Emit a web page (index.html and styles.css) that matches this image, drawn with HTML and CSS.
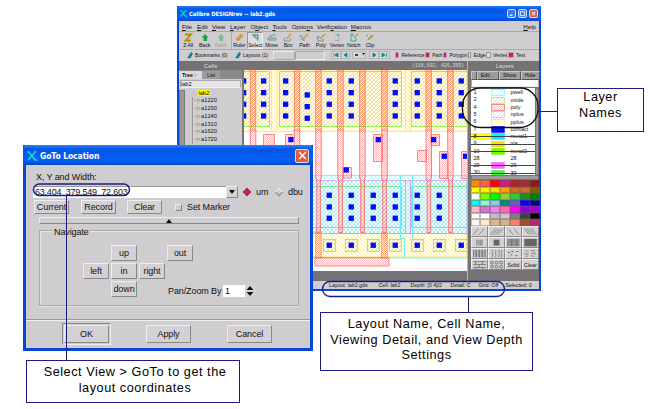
FILE: index.html
```html
<!DOCTYPE html>
<html lang="en">
<head>
<meta charset="utf-8">
<title>Calibre DESIGNrev - GoTo Location</title>
<link rel="stylesheet" href="styles.css">
</head>
<body>
<section class="window main-window">
  <header class="titlebar">
    <svg class="logo" viewBox="0 0 10 10"><path d="M0 1h2l6 8h2M9 0L1 9" stroke="#19dfd3" stroke-width="1.5" fill="none"/></svg>
    <span class="title">Calibre DESIGNrev -- lab2.gds</span>
    <span class="wbtn"><svg viewBox="0 0 8 8"><path d="M2 6h3" stroke="#fff" stroke-width="1.4"/></svg></span>
    <span class="wbtn"><svg viewBox="0 0 8 8"><path d="M1.5 2h5v4.500h-5z" stroke="#fff" fill="none"/></svg></span>
    <span class="wbtn close"><svg viewBox="0 0 8 8"><path d="M2 2l4 4M6 2L2 6" stroke="#fff" stroke-width="1.2"/></svg></span>
  </header>
  <nav class="menu">
    <span class="w15"><u>F</u>ile</span><span class="w15"><u>E</u>dit</span><span class="w18"><u>V</u>iew</span><span class="w20"><u>L</u>ayer</span><span class="w22">O<u>b</u>ject</span><span class="w19"><u>T</u>ools</span><span class="w25">Optio<u>n</u>s</span><span class="w34">Verifi<u>c</u>ation</span><span><u>M</u>acros</span><span class="help"><u>H</u>elp</span>
  </nav>
  <div class="toolbar">
    <div class="tool"><svg viewBox="0 0 10 9"><path d="M2 1.500h6L2.500 7.500H8" stroke="#b88b00" stroke-width="1.800" fill="none"/></svg><span>Z All</span></div>
    <div class="tool"><svg viewBox="0 0 10 9"><path d="M1.500 4.500L5 1l3.500 3.500H7V8H3.500V4.500z" fill="#15a044"/></svg><span>Back</span></div>
    <div class="tool faded"><svg viewBox="0 0 10 9"><path d="M1.500 4.500L5 1l3.500 3.500H7V8H3.500V4.500z" fill="#7dbb98"/></svg><span>Forth</span></div>
    <div class="tool ruler"><svg viewBox="0 0 10 9"><path d="M2 6L7 1l2 2-5 5z" fill="#e0a52b" stroke="#9a7420" stroke-width=".5"/></svg><span>Ruler</span></div>
    <div class="tool pressed"><svg viewBox="0 0 10 9"><path d="M2 2h6v6M3 2l4 4" stroke="#4a9a9a" stroke-width="1.500" fill="none"/></svg><span>Select</span></div>
    <div class="tool"><svg viewBox="0 0 10 9"><path d="M1 7h8V5H1zM2 3h3M5 2h4" stroke="#6b9797" fill="#b4cccc"/></svg><span>Move</span></div>
    <div class="tool"><svg viewBox="0 0 10 9"><path d="M1 5v3h6V5" stroke="#5da3a3" fill="none"/><path d="M3 6l5-5" stroke="#c9a13c" stroke-width="1.600"/></svg><span>Box</span></div>
    <div class="tool"><svg viewBox="0 0 10 9"><path d="M0 3h3v4h3" stroke="#4ba0a0" fill="none"/><path d="M4 6l5-5" stroke="#c9a13c" stroke-width="1.600"/></svg><span>Path</span></div>
    <div class="tool"><svg viewBox="0 0 10 9"><path d="M1 4h3M1 4l1 4h5V6" stroke="#4ba0a0" fill="none"/><path d="M4 6l5-5" stroke="#c9a13c" stroke-width="1.600"/></svg><span>Poly</span></div>
    <div class="tool"><svg viewBox="0 0 10 9"><path d="M3 1.500h4v6H3" stroke="#8eb0b5" fill="none"/><path d="M6 1v2" stroke="#4a9a9a"/></svg><span>Vertex</span></div>
    <div class="tool"><svg viewBox="0 0 10 9"><path d="M2 1v7h5V5M2 1h2v3" stroke="#4ba0a0" fill="#b4dcdc"/><path d="M5 5l4-4" stroke="#c9a13c" stroke-width="1.600"/></svg><span>Notch</span></div>
    <div class="tool"><svg viewBox="0 0 10 9"><path d="M1 3l2-1M3 7l1-2" stroke="#4ba0a0"/><path d="M4 6l4-4" stroke="#b79b42" stroke-width="1.800"/></svg><span>Clip</span></div>
  </div>
  <div class="options">
    <svg class="mark" viewBox="0 0 7 8"><path d="M1 7L5 1l1 1-3 5" stroke="#147f8e" stroke-width="1.600" fill="none"/></svg><span class="bm">Bookmarks (0)</span>
    <svg class="mark" viewBox="0 0 7 8"><path d="M1 7L5 1l1 1-3 5" stroke="#147f8e" stroke-width="1.600" fill="none"/></svg><span class="lay">Layouts (1)</span>
    <i class="combo c1"></i><i class="combo c2"></i>
    <svg class="nav" viewBox="0 0 60 8"><g fill="#d6d4d6" stroke="#a5a3a5" stroke-width=".6"><path d="M.5.500h9v7h-9zM10.500.500h8v7h-8zM21.500.500h13v7h-13zM38.500.500h9v7h-9zM48.500.500h10v7h-10z"/></g><path d="M3 2v4M7 2v4L4 4zM16 2v4l-3-2zM42 2v4l3-2zM51 2v4l3-2zM55.500 2v4" fill="#008c86" stroke="#008c86" stroke-width=".8"/><path d="M24 4h3" stroke="#444" stroke-width="2"/><path d="M31 2h3l-1.500 2z" fill="#111"/></svg>
    <span class="chk on w30">Reference</span><span class="chk on w18">Path</span><span class="chk on w25">Polygon</span><span class="chk w18">Edge</span><span class="chk w22">Vertex</span><span class="chk on">Text</span>
  </div>
  <div class="work">
    <aside class="cells">
      <div class="head">Cells</div>
      <div class="tabs"><span class="tab active">Tree <small>▽</small></span><span class="tab">List</span></div>
      <div class="field">lab2</div>
      <div class="tree"><i class="track"></i><ul id="tree"></ul></div>
    </aside>
    <main class="view">
      <div class="head coords">(116,602, 426,359)</div>
      <svg id="layout" class="layout" viewBox="0 0 223 201">
        <defs>
          <pattern id="oxide" width="4" height="4" patternUnits="userSpaceOnUse"><path d="M-1 1L1-1M0 4L4 0M3 5L5 3" stroke="#8cf962" stroke-width=".7"/></pattern>
          <pattern id="pplus" width="4" height="4" patternUnits="userSpaceOnUse"><path d="M-1 3L1 5M0 0L4 4M3-1L5 1" stroke="#ffe480" stroke-width=".7"/></pattern>
          <pattern id="pwell" width="4" height="4" patternUnits="userSpaceOnUse"><path d="M-1 3L1 5M0 0L4 4M3-1L5 1" stroke="#8cf2fa" stroke-width=".7"/></pattern>
          <pattern id="nplus" width="4" height="4" patternUnits="userSpaceOnUse"><path d="M-1 1L1-1M0 4L4 0M3 5L5 3" stroke="#e9b4f2" stroke-width=".8"/></pattern>
          <pattern id="poly" width="2" height="2" patternUnits="userSpaceOnUse"><path d="M0 0h1v1H0zM1 1h1v1H1z" fill="#ff7777" opacity=".5"/></pattern>
          <pattern id="active" width="2" height="2" patternUnits="userSpaceOnUse"><path d="M0 0h1v1H0zM1 1h1v1H1z" fill="#f25328" opacity=".55"/></pattern>
        </defs>
        <rect width="223" height="201" fill="#fff"/>
        <path d="M0 0h223v61.500H0z" fill="url(#pplus)" stroke="#ffe070" stroke-width=".8"/>
        <path d="M-2 1.500H25.500v55H-2zM35.500 1.500h122v55h-122zM167.500 1.500H225v55h-57.500z" fill="url(#oxide)" stroke="#75f347" stroke-width=".8"/>
        <path d="M27.500 0v61M33 0v61M161.500 0v61M166 0v61" stroke="#ffdc55" fill="none" stroke-width=".7"/>
        <path d="M0 105.500h223v58H0z" fill="url(#pwell)" stroke="#7cf3fa"/>
        <path d="M0 110.500h223v53H0z" fill="url(#nplus)" stroke="#dfa2ec" stroke-width=".8"/>
        <path d="M0 163.500h223v23.500H0z" fill="url(#pplus)" stroke="#ffe070"/>
        <path d="M0 163.500h223" stroke="#ffa052"/><path d="M0 188h223" stroke="#67f4f4"/>
        <path d="M60 116.500h97.500v41H60M223 116.500h-55.500v41H223" fill="none" stroke="#78ed8a"/>
        <path d="M156.500 105v63.500h4V188M168.500 105v63" stroke="#6ff0f6" fill="none"/>
        <path d="M161.500 110v53M166.500 110v53" stroke="#df9ced"/>
        <g id="strips"></g>
        <path d="M19.500 110V64.500h11V110M49.500 64.500h-8V110M129.500 64.500h9v27h-9zM187 64.500h8.500v11H187zM173.500 80.500h9v11h-9zM195.500 81.500h8.500v27h-8.500zM217.500 81.500h8v27h-8zM99 97.500h8.500v10.500H99zM71 187.500h74v8.500H71z" fill="url(#poly)" stroke="#fb6c70" stroke-width=".8"/>
        <g id="contacts" fill="#0010f5"></g>
      </svg>
    </main>
    <aside class="layers">
      <div class="head">Layers</div>
      <div class="buttons"><i></i><span>Edit...</span><span>Show</span><span>Hide</span></div>
      <div class="field"></div>
      <div class="list"><div id="layers"></div><i class="thumb"></i></div>
      <div class="hscroll"></div>
      <div id="palette" class="palette"></div>
      <div class="patterns">
        <svg viewBox="0 0 17 11"><path d="M1 9l6-7M8 9l6-7" stroke="#555" stroke-width=".7"/></svg>
        <svg viewBox="0 0 17 11"><path d="M1 9l6-7M4 9l6-7M7 9l6-7M10 9l6-7" stroke="#555" stroke-width=".7"/></svg>
        <svg viewBox="0 0 17 11"><path d="M2 2l6 7M9 2l6 7" stroke="#555" stroke-width=".7"/></svg>
        <svg viewBox="0 0 17 11"><path d="M1 2l6 7M4 2l6 7M7 2l6 7M10 2l6 7" stroke="#555" stroke-width=".7"/></svg>
        <svg viewBox="0 0 17 11"><path d="M4.500 5.500h8" stroke="#888" stroke-width="7" stroke-dasharray="1 .5"/></svg>
        <svg viewBox="0 0 17 11"><path d="M5 2h7v7H5z" fill="#666"/></svg>
        <svg viewBox="0 0 17 11"><path d="M1 5.500h15" stroke="#666" stroke-width="9" stroke-dasharray="1 .5"/></svg>
        <svg viewBox="0 0 17 11"><path d="M1 1h15v9H1z" fill="#666"/></svg>
        <svg viewBox="0 0 17 11"><path d="M1 5.500h15" stroke="#555" stroke-width="9" stroke-dasharray=".8 1"/></svg>
        <svg viewBox="0 0 17 11"><path d="M3 1l1 2-1 2 1 2-1 3M7 1l1 2-1 2 1 2-1 3M11 1l1 2-1 2 1 2-1 3M14 1l1 2-1 2 1 2-1 3" stroke="#666" stroke-width=".8" fill="none"/></svg>
        <svg viewBox="0 0 17 11"><path d="M2 4h2M6 3h2M5 7h2M12 3h2M11 8h2" stroke="#444"/></svg>
        <svg viewBox="0 0 17 11"><path d="M2 3l2-1 2 1M9 2h3l2 1M1 6h3l2-1M9 6l2-1 4 1M3 9l3-1M9 8l4 1" stroke="#666" stroke-width=".8" fill="none"/></svg>
        <svg viewBox="0 0 17 11"><path d="M1 2h15M1 5.500h15M1 9h15M4 2v3.500M12 2v3.500M8 5.500V9M4 9v2M12 9v2" stroke="#555" stroke-width=".8"/></svg>
        <svg viewBox="0 0 17 11"><g fill="none" stroke="#555" stroke-width=".8"><circle cx="3" cy="3" r="1.700"/><circle cx="8.500" cy="3" r="1.700"/><circle cx="14" cy="3" r="1.700"/><circle cx="3" cy="8" r="1.700"/><circle cx="8.500" cy="8" r="1.700"/><circle cx="14" cy="8" r="1.700"/></g></svg>
        <span>Solid</span><span>Clear</span>
      </div>
    </aside>
  </div>
  <footer class="status"><span class="s1">Layout: lab2.gds</span><span class="s2">Cell: lab2</span><span class="s3">Depth: [0 4]/2</span><span class="s4">Detail: C</span><span class="s5">Grid: Off</span><span>Selected: 0</span></footer>
</section>

<section class="window dialog">
  <header class="titlebar">
    <svg class="logo" viewBox="0 0 10 10"><path d="M0 1h2l6 8h2M9 0L1 9" stroke="#19dfd3" stroke-width="1.500" fill="none"/></svg>
    <span class="title">GoTo Location</span>
    <span class="wbtn close"><svg viewBox="0 0 8 8"><path d="M1.500 1.500l5 5M6.500 1.500l-5 5" stroke="#fff" stroke-width="1.100"/></svg></span>
  </header>
  <div class="form">
    <label class="caption">X, Y and Width:</label>
    <div class="row coords-row"><div class="entry">63.404&nbsp; 379.549&nbsp; 72.603</div><span class="drop"></span><i class="radio on"></i><span class="um">um</span><i class="radio"></i><span>dbu</span></div>
    <div class="row action-row"><button class="b-current">Current</button><button class="b-record">Record</button><button class="b-clear">Clear</button><i class="box"></i><span>Set Marker</span></div>
    <div class="collapse"><i></i></div>
    <div class="navigate">
      <span class="legend">Navigate</span>
      <div class="pad"><button class="up">up</button><button class="out">out</button><button class="left">left</button><button class="in">in</button><button class="right">right</button><button class="down">down</button></div>
      <div class="zoom"><span>Pan/Zoom By</span><span class="num">1</span><svg viewBox="0 0 10 12"><path d="M0 0h10v12H0z" fill="#d4d2d4"/><path d="M1.500 5L5 1l3.500 4zM1.500 7L5 11l3.500-4z" fill="#111"/></svg></div>
    </div>
    <div class="footer"><span class="default"><button>OK</button></span><button>Apply</button><button>Cancel</button></div>
  </div>
</section>

<div class="callout goto-note">Select View &gt; GoTo to get the<br>layout coordinates</div>
<div class="callout status-note">Layout Name, Cell Name,<br>Viewing Detail, and View Depth<br>Settings</div>
<div class="callout layer-note">Layer<br>Names</div>
<svg class="leaders" viewBox="0 0 650 409" fill="none" stroke="#1b1b83">
  <rect x="33.500" y="184" width="96" height="11.500" rx="5.700" stroke-width="1.500"/>
  <path d="M66.500 195v165M468.500 297v15M538 111.500h20"/>
  <rect x="322.500" y="281.500" width="182" height="15" rx="7.500" stroke-width="1.300"/>
  <rect x="462.500" y="88" width="75.500" height="39.500" rx="18" stroke="#111" stroke-width="1.300"/>
</svg>
<script src="script.js"></script>
</body>
</html>
```
FILE: styles.css
```css
* { box-sizing: border-box; }
body { margin: 0; width: 650px; height: 409px; position: relative; overflow: hidden; background: #fff; font-family: "Liberation Sans", Arial, sans-serif; color: #111; }
span, label, button { white-space: nowrap; }
i { display: block; }
.window { position: absolute; display: flex; flex-direction: column; background: #cfcdcf; border: 2px solid #0647d6; border-top: 0; }
.main-window { left: 177px; top: 6px; width: 364px; height: 285px; font-size: 5.6px; }
.titlebar { display: flex; align-items: center; background: linear-gradient(#2a86f8, #0355e6 20%, #0361f8 75%, #0448c8); color: #fff; font-family: "DejaVu Sans", sans-serif; font-weight: bold; margin: 0 -2px; flex: none; }
.main-window .titlebar { height: 15px; padding: 0 3px; font-size: 6px; gap: 2px; border-radius: 2px 2px 0 0; }
.logo { width: 7px; height: 7px; }
.title { flex: 1; }
.main-window .title { font-family: "DejaVu Sans Condensed", "DejaVu Sans", sans-serif; font-size: 5.8px; letter-spacing: -.05px; }
.wbtn { display: grid; place-items: center; width: 9px; height: 9px; background: #3978ed; border: .7px solid #cfe0ff; border-radius: 2px; }
.wbtn svg { width: 7px; height: 7px; }
.close { background: #e65a35; }
.menu { display: flex; height: 11px; align-items: center; padding: 0 3px; font-size: 6.2px; border-bottom: 1px solid #aaa8aa; flex: none; }
.help { margin-left: auto; }
.w15 { width: 15px; } .w18 { width: 18px; } .w19 { width: 19.300px; } .w20 { width: 20.400px; } .w22 { width: 22px; } .w25 { width: 25px; } .w30 { width: 30px; } .w34 { width: 34px; }
.toolbar { display: flex; height: 17.500px; padding-left: 1px; border-bottom: 1px solid #aaa8aa; flex: none; }
.tool { width: 16.400px; display: flex; flex-direction: column; align-items: center; line-height: 6px; font-size: 5.300px; letter-spacing: -.1px; padding-top: 1px; }
.tool svg { width: 10px; height: 9px; }
.faded { color: #999; }
.ruler { margin-left: 1.500px; border-left: 1px solid #aaa; }
.pressed { background: #dedcde; border: 1px solid; border-color: #999 #eee #eee #999; padding-top: 0; }
.options { display: flex; align-items: center; height: 11px; padding-left: 8px; font-size: 5.200px; flex: none; }
.mark { width: 6px; height: 7px; margin-right: 2px; flex: none; }
.bm { width: 40px; font-size: 5px; } .lay { width: 29.500px; font-size: 5px; }
.combo { height: 9px; border: 1px solid; border-color: #eee #aaa #aaa #eee; flex: none; }
.c1 { width: 22px; } .c2 { width: 30px; border-color: #aaa #eee #eee #aaa; }
.nav { width: 60px; height: 8px; margin: 0 4px 0 6px; flex: none; }
.chk { display: flex; align-items: center; gap: 2.500px; font-size: 5px; flex: none; }
.chk::before { content: ""; width: 4px; height: 4px; background: #dddbdd; border: .5px solid #999; }
.chk.on::before { background: #b02a5d; border-color: #d693ad; }
.work { display: flex; height: 220px; background: #747274; flex: none; }
.head { height: 9.500px; background: #747274; color: #ddd; text-align: center; line-height: 10px; font-size: 6px; }
.cells { width: 65px; border-right: 2px solid #777577; background: #cfcdcf; }
.tabs { display: flex; height: 9px; background: #8b898b; align-items: end; }
.tab { height: 8px; width: 18px; padding-left: 5px; line-height: 8px; font-size: 5.300px; background: #9c9a9c; }
.tab.active { width: 23px; padding-left: 3px; background: #dedcde; font-weight: bold; }
.tab small { font-size: 4px; font-weight: normal; color: #777; }
.field { background: #fff; height: 7.500px; border: 1px solid #aaa; border-bottom-color: #eee; }
.cells .field { margin: 1px 1px 2px; line-height: 6px; background: #e5e3e5; }
.tree { display: flex; height: 60px; }
.track { width: 6px; background: #999799; border: 1px solid #777; }
.tree ul { margin: 0; padding: 0 0 0 7px; list-style: none; }
.tree li { height: 7.750px; line-height: 7.750px; padding-left: 1px; white-space: nowrap; border-left: 1px solid #999; font-size: 5.700px; }
.tree li::before { content: "-◇ "; color: #666; font-size: 5px; }
.tree li:first-child { border: 0; padding-left: 0; }
.tree li:first-child::before { content: "▢ "; color: #aaa; }
.tree mark { background: #ffff00; }
.view { width: 223px; }
.coords { text-align: right; padding-right: 3px; font-family: "Liberation Mono", monospace; font-size: 4.800px; }
.layout { display: block; width: 223px; height: 201px; }
.layers { width: 72px; padding-left: 2.500px; border-left: 1px solid #b7b5b7; background: #747274; }
.buttons { display: grid; grid-template-columns: 6px 22px 22px 19px; height: 9px; padding: 1px 0; font-size: 5.300px; }
.buttons > * { background: #a09ea0; border: .5px solid; border-color: #c6c6c6 #555 #555 #c6c6c6; text-align: center; line-height: 7px; }
.layers .field { height: 8px; }
.list { display: flex; height: 87px; background: #fff; overflow: hidden; margin-top: 1px; }
#layers { width: 64px; padding-top: 1.2px; }
.layer { display: grid; grid-template-columns: 20px 20px 24px; align-items: center; height: 7.300px; line-height: 7px; position: relative; font-size: 5.500px; }
.layer b { font-weight: normal; padding-left: 3px; height: 7.300px; }
.layer svg { width: 14px; height: 6.800px; }
.layer.off::after { content: ""; position: absolute; left: 0; right: 0; top: 3.300px; height: 1px; background: #444; }
.layer.current b { background: #ffff00; }
.thumb { width: 5px; background: #9c9a9c; border: 1px solid #777; }
.hscroll { height: 5px; background: #9c9a9c; border: 1px solid #777; }
.palette { display: grid; grid-template-columns: repeat(7, 9.9px); grid-auto-rows: 6.500px; height: 45.500px; }
.palette i { border: .4px solid rgba(90,90,90,.4); }
.patterns { display: grid; grid-template-columns: repeat(4, 1fr); grid-auto-rows: 11.200px; }
.patterns > * { width: 100%; height: 11.200px; background: #d3d1d3; border: .7px solid; border-color: #eee #888 #888 #eee; }
.patterns span { line-height: 10px; text-align: center; font-size: 5.300px; }
.status { display: flex; align-items: center; height: 9px; padding-left: 150px; font-size: 5.300px; letter-spacing: -.02px; flex: none; }
.s1 { width: 49.500px; } .s2 { width: 32px; } .s3 { width: 40px; } .s4 { width: 28px; } .s5 { width: 27px; }

.dialog { left: 23px; top: 145px; width: 290px; height: 206px; border-width: 0 3px 3px; font-size: 9px; }
.dialog .titlebar { height: 20px; padding: 1px 4px 0 4px; margin: 0 -3px; font-size: 8.500px; border-radius: 4px 4px 0 0; }
.dialog .logo { width: 10px; height: 10px; margin-right: 3px; }
.dialog .title { letter-spacing: -.08px; font-family: "DejaVu Sans Condensed", "DejaVu Sans", sans-serif; }
.dialog .wbtn { width: 14px; height: 14px; }
.dialog .wbtn svg { width: 11px; height: 11px; }
.form { display: flex; flex-direction: column; height: 183px; padding: 7px 0 0; letter-spacing: -.1px; }
.caption { margin-left: 10px; height: 13.500px; line-height: 11px; }
.row { display: flex; align-items: center; flex: none; }
.coords-row { height: 12px; padding-left: 7px; }
.entry { width: 193px; height: 12px; background: #fff; line-height: 11px; padding-left: 2px; border-top: 1px solid #999; letter-spacing: -.22px; }
.drop { width: 12px; height: 12px; background: #d4d2d4; border: 1px solid; border-color: #eee #888 #888 #eee; display: grid; place-items: center; }
.drop::before { content: ""; border: 3.500px solid transparent; border-top: 4px solid #111; border-bottom: 0; }
.radio { width: 6px; height: 6px; transform: rotate(45deg); border: 1px solid; border-color: #eee #888 #888 #eee; margin: 0 6px 0 6px; }
.radio.on { background: #b02a5d; border-color: #b02a5d; }
.um { width: 14px; }
button { font: inherit; letter-spacing: inherit; color: #111; padding: 0; background: #d3d1d3; border: 1px solid; border-color: #eee #888 #888 #eee; flex: none; }
.action-row { margin-top: 2.500px; padding-left: 8px; height: 14px; }
.action-row button { height: 14px; }
.b-current { width: 35px; } .b-record { width: 35px; margin-left: 12px; } .b-clear { width: 35px; margin-left: 11px; }
.box { width: 7px; height: 7px; margin: 0 5px 0 13px; border: 1px solid; border-color: #eee #888 #888 #eee; }
.collapse { height: 7px; margin: 3px 11px 0 13px; border: 1px solid; border-color: #eee #888 #888 #eee; flex: none; display: grid; place-items: center; }
.collapse i { border: 3px solid transparent; border-bottom: 4px solid #111; border-top: 0; }
.navigate { margin: 6px 11px 0 13px; height: 76px; border: 1px solid #aaa8aa; box-shadow: inset 1px 1px #e7e5e7, 0 1px #e7e5e7; flex: none; }
.legend { display: block; width: 37px; height: 10px; line-height: 10px; margin: -4px 0 0 12px; padding-left: 2px; background: #cfcdcf; }
.pad { display: grid; grid-template-columns: 26px 26px 26px 26px; grid-template-rows: 16px 16px 16px; column-gap: 2px; row-gap: 2px; margin: 8px 0 0 43px; grid-template-areas: ". up . out" "left in right ." ". down . ."; }
.up { grid-area: up; } .out { grid-area: out; } .left { grid-area: left; } .in { grid-area: in; } .right { grid-area: right; } .down { grid-area: down; }
.zoom { display: flex; align-items: center; margin: -12px 0 0 128px; height: 12px; }
.zoom > span:first-child { width: 55px; }
.num { width: 22px; height: 12px; line-height: 12px; background: #fff; padding-left: 2px; }
.zoom svg { width: 10px; height: 12px; }
.footer { display: flex; align-items: center; margin-top: 13px; height: 29px; padding-left: 36px; border-top: 1px solid #999; box-shadow: inset 0 1px #eee; flex: none; }
.footer button { width: 45px; height: 18px; }
.default { border: 1px solid; border-color: #888 #eee #eee #888; padding: 1px; margin-right: 35px; }
.footer > button + button { margin-left: 36px; }

.callout { position: absolute; background: #fff; border: 1px solid #1b1b83; color: #000; text-align: center; font-size: 12.700px; line-height: 15.500px; white-space: nowrap; letter-spacing: .53px; }
.goto-note { left: 26px; top: 360px; width: 214px; height: 43px; padding-top: 4px; padding-left: 4px; }
.status-note { left: 320px; top: 312px; width: 213px; height: 59px; padding-top: 4px; }
.layer-note { left: 557px; top: 88px; width: 87px; height: 44px; padding-top: 1px; }
.leaders { position: absolute; left: 0; top: 0; width: 650px; height: 409px; }
```
FILE: script.js
```js
const byId = id => document.getElementById(id);

byId('tree').innerHTML = ['lab2', 'a1220', 'a1230', 'a1240', 'a1310', 'a1620', 'a1720']
  .map((name, i) => i ? `<li>${name}</li>` : `<li><mark>${name}</mark></li>`).join('');

// number, name, fill, outline, state
const layers = [
  [1, 'pwell', 'url(#pwell)', '#63f4ff', ''], [2, 'oxide', 'url(#oxide)', '#71ff3c', ''],
  [4, 'poly', 'url(#poly)', '#ff5555', ''], [5, 'nplus', 'url(#nplus)', '#e79df2', ''],
  [6, 'pplus', 'url(#pplus)', '#ffdc55', ''], [7, 'contact', '#0010f5', '#0010f5', ''],
  [8, 'metal1', '#00f5ff', '#00f5ff', 'off current'], [9, 'via', '#ffdb00', '#ffdb00', 'off'],
  [10, 'metal2', '#80f500', '#80f500', 'off'], [28, '28', 'none', 'none', ''],
  [29, '29', '#f86af8', '#f86af8', 'off'], [30, '30', '#4af04a', '#4af04a', 'off']
];
byId('layers').innerHTML = layers.map(([n, name, fill, line, state]) =>
  `<div class="layer ${state}"><b>${n}</b><svg viewBox="0 0 14 7"><rect x=".5" y=".5" width="13" height="6" fill="${fill}" stroke="${line}" stroke-width=".7"/></svg><span>${name}</span></div>`).join('');

byId('palette').innerHTML = `#ff8c00 #ff6347 #ff0000 #d01c8b #b22222 #a52a2a #8b1a1a
#ffff00 #fff000 #ffd700 #ffa500 #d2691e #cd6b28 #8b5a00
#f0fff0 #7cfc00 #00ff00 #9acd32 #32cd32 #228b22 #008000
#00ffff #7fffd4 #87ceeb #008b8b #6a5acd #0000ff #00008b
#ffb6c1 #da70d6 #ee82ee #ff69b4 #ff00ff #9400d3 #a000d0
#ffffff #ffffff #c0c0c0 #d8bfd8 #808080 #404040 #000000
#fff5ee #faebd7 #deb887 #d2b48c #fa8072 #a0522d #b03060`
  .split(/\s+/).map(c => `<i style="background:${c}"></i>`).join('');

// poly gates: upper run, lower run through the n+ row
const strips = [6.3, 50.3, 71.7, 93.7, 115.7, 137.7, 182, 203.7];
const toRail = [71.7, 137.7];
byId('strips').innerHTML = strips.map(x => {
  let s = `<rect x="${x}" y="-1" width="5.5" height="61" fill="url(#active)" stroke="#ea7848" stroke-width=".7"/>` +
    `<path d="M${x} 60v49h1v53.500h3.700V109h.8V60" fill="url(#poly)" stroke="#f3656c" stroke-width=".8"/>`;
  if (toRail.includes(x)) s += `<rect x="${x}" y="162" width="5.500" height="26" fill="url(#active)" stroke="#ff9a4c" stroke-width=".8"/>`;
  return s;
}).join('');

const cols = [85.3, 107.3, 129.3, 151.3, 173.3, 195.3, 217.3];
const pts = [];
[-.3, 19.7, 41.7, 85.3, 107.3, 151.3, 173.3, 195.3, 217.3].forEach(x => [11, 22.7, 34.3, 46].forEach(y => pts.push([x, y])));
[25, 36.7, 48.3].forEach(y => pts.push([63.3, y]));
cols.slice(0, 6).forEach(x => [125.3, 137, 148.3].forEach(y => pts.push([x, y])));
cols.forEach(x => pts.push([x, 175.3]));
pts.push([134.3, 69.7], [189.7, 69.7], [200.3, 86.3], [221.7, 86.3], [102.3, 100], [47, 69.7]);
byId('contacts').innerHTML =
  cols.map(x => `<rect x="${x - 6}" y="169.300" width="12" height="12" fill="url(#oxide)" stroke="#75f347" stroke-width=".8"/>`).join('') +
  pts.map(([x, y]) => `<rect x="${x - 2.7}" y="${y - 2.7}" width="5.300" height="5.300"/>`).join('');
```
